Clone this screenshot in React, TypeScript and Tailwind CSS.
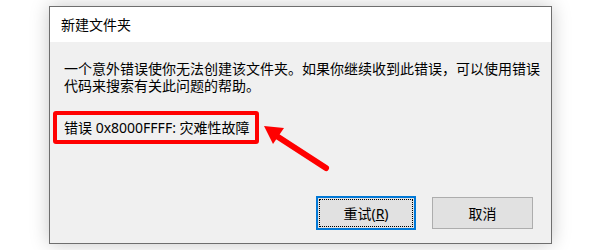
const font = {
  fontFamily: '"Noto Sans", "Noto Sans CJK SC", sans-serif',
};

function Arrow() {
  return (
    <svg
      className="pointer-events-none absolute left-0 top-0"
      width={600}
      height={250}
      viewBox="0 0 600 250"
    >
      <line
        x1={272}
        y1={133}
        x2={326}
        y2={168}
        stroke="#ff0000"
        strokeWidth={6}
        strokeLinecap="round"
      />
      <polygon points="264,126 284,128 273,144" fill="#ff0000" />
    </svg>
  );
}

export default function App() {
  return (
    <div className="relative h-[250px] w-[600px] overflow-hidden bg-white" style={font}>
      <div className="ml-[49px] pt-[6px]">
        <div className="flex h-[238px] w-[503px] flex-col border border-[#6e6e6e] shadow-[0_0_18px_rgba(0,0,0,0.22)]">
          <div className="flex h-[35px] items-center bg-white pl-[11px] text-[14px] text-black">
            新建文件夹
          </div>
          <div className="flex flex-1 flex-col bg-[#f0f0f0] px-[14px] pt-[18px] pb-[13px] text-[14px] leading-[17px] text-black">
            <p className="whitespace-nowrap">一个意外错误使你无法创建该文件夹。如果你继续收到此错误，可以使用错误</p>
            <p className="whitespace-nowrap">代码来搜索有关此问题的帮助。</p>
            <div className="-ml-[11px] mt-[17px] flex h-[33px] w-[206px] items-center whitespace-nowrap rounded-[3px] border-4 border-[#ff0000] pl-[7px]">
              错误 0x8000FFFF: 灾难性故障
            </div>
            <div className="mt-auto flex items-center justify-end gap-[16px] pr-[4px]">
              <button className="flex h-[34px] w-[100px] items-center justify-center border-2 border-[#0078d7] bg-[#e1e1e1] p-[1px]">
                <span className="flex h-full w-full items-center justify-center border border-dotted border-black">
                  重试(<span className="underline">R</span>)
                </span>
              </button>
              <button className="flex h-[32px] w-[101px] items-center justify-center border border-[#adadad] bg-[#e1e1e1]">
                取消
              </button>
            </div>
          </div>
        </div>
      </div>
      <Arrow />
    </div>
  );
}
